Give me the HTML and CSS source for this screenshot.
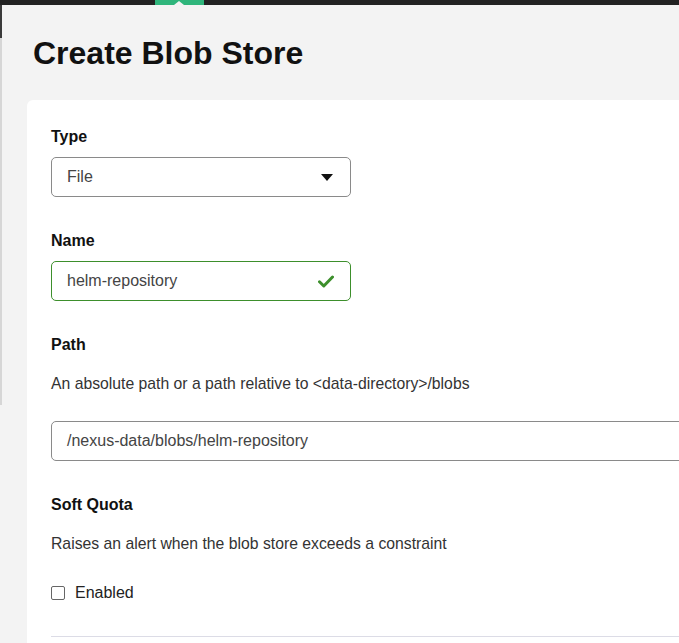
FILE: index.html
```html
<!DOCTYPE html>
<html>
<head>
<meta charset="utf-8">
<link rel="stylesheet" href="styles.css">
</head>
<body>
<div class="topbar">
  <div class="tab"><span class="notch"></span></div>
</div>
<div class="shell">
  <div class="rail"></div>
  <main class="main">
    <h1 class="title">Create Blob Store</h1>
    <section class="card">
      <div class="field">
        <label class="label first">Type</label>
        <div class="input select">
          <span>File</span>
          <svg class="caret" width="12" height="7" viewBox="0 0 12 7"><path d="M0 0H12L6 7Z" fill="#111"/></svg>
        </div>
      </div>
      <div class="field">
        <label class="label">Name</label>
        <div class="input valid">
          <span>helm-repository</span>
          <svg class="check" width="16" height="13" viewBox="0 0 16 13"><path d="M1.5 6.8L5.8 11L14.5 2" fill="none" stroke="#3d8f2c" stroke-width="3" stroke-linecap="round" stroke-linejoin="round"/></svg>
        </div>
      </div>
      <div class="field">
        <label class="label">Path</label>
        <p class="desc">An absolute path or a path relative to &lt;data-directory&gt;/blobs</p>
        <div class="input wide path"><span>/nexus-data/blobs/helm-repository</span></div>
      </div>
      <div class="field">
        <label class="label">Soft Quota</label>
        <p class="desc quota">Raises an alert when the blob store exceeds a constraint</p>
        <div class="checkrow"><span class="box"></span><span>Enabled</span></div>
      </div>
      <hr class="divider">
    </section>
  </main>
</div>
</body>
</html>
```
FILE: styles.css
```css
* { box-sizing: border-box; }
html, body { margin: 0; padding: 0; }
body {
  background: #f3f3f3;
  font-family: "Liberation Sans", Arial, sans-serif;
  color: #111;
  width: 679px;
  height: 643px;
  overflow: hidden;
}
.topbar {
  height: 5px;
  background: #222;
  position: relative;
}
.tab {
  position: absolute;
  left: 155px;
  top: 0;
  width: 49px;
  height: 5px;
  background: #2fb57b;
}
.notch {
  position: absolute;
  left: 19px;
  bottom: 0;
  width: 0;
  height: 0;
  border-left: 5px solid transparent;
  border-right: 5px solid transparent;
  border-bottom: 4px solid #f3f3f3;
}
.shell {
  display: flex;
  height: 638px;
}
.rail {
  width: 2px;
  flex: none;
  background: linear-gradient(#3a3a3a 0, #3a3a3a 33px, #d6d6d6 33px, #d6d6d6 400px, transparent 400px);
}
.main {
  flex: 1;
  padding-left: 25px;
  min-width: 0;
}
.title {
  margin: 0;
  padding: 31px 0 0 6px;
  font-size: 32px;
  line-height: 34px;
  font-weight: bold;
  color: #111;
  height: 95px;
}
.card {
  background: #fff;
  border-top-left-radius: 6px;
  padding: 25px 0 0 24px;
  height: 560px;
  margin-right: -20px;
}
.field { margin-bottom: 31px; }
.label {
  display: block;
  font-size: 16px;
  line-height: 24px;
  font-weight: bold;
  color: #111;
  padding-top: 1px;
  margin-bottom: 8px;
}
.label.first { padding-top: 0; }
.input {
  width: 300px;
  height: 40px;
  border: 1px solid #8a8a8a;
  border-radius: 5px;
  padding: 0 16px 0 15px;
  display: flex;
  align-items: center;
  justify-content: space-between;
  font-size: 16px;
  color: #444;
}
.input.valid { border-color: #3d8f2c; }
.input.wide { width: auto; border-top-right-radius: 0; border-bottom-right-radius: 0; }
.caret { margin-right: 1px; }
.desc {
  margin: 17px 0 27px;
  font-size: 15.75px;
  line-height: 20px;
  color: #333;
}
.desc.quota { margin-bottom: 27px; }
.checkrow {
  display: flex;
  align-items: center;
  height: 24px;
  font-size: 16px;
  color: #222;
  gap: 10px;
}
.box {
  width: 14px;
  height: 14px;
  border: 1px solid #666;
  border-radius: 2px;
  background: #fff;
}
.divider {
  border: 0;
  border-top: 1px solid #dcdce6;
  margin: 4px 0 0;
}
```
